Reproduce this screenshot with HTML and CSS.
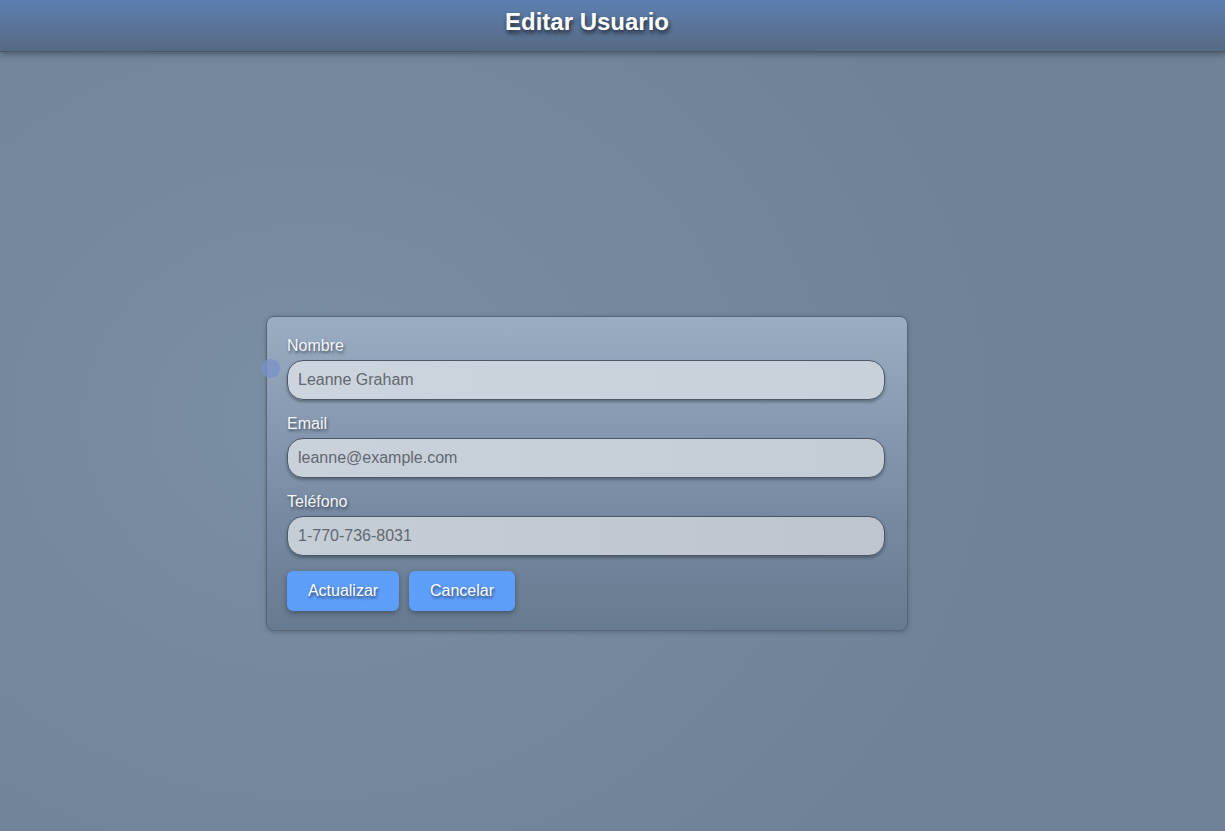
FILE: index.html
```html
<!DOCTYPE html>
<html lang="es">
<head>
<meta charset="utf-8">
<title>Editar Usuario</title>
<link rel="stylesheet" href="styles.css">
</head>
<body>
<header class="topbar">
  <h1 class="title">Editar Usuario</h1>
</header>
<main class="stage">
  <form class="card">
    <span class="dot"></span>
    <label class="field">
      <span class="label">Nombre</span>
      <input class="input" type="text" value="Leanne Graham">
    </label>
    <label class="field">
      <span class="label">Email</span>
      <input class="input" type="email" value="leanne@example.com">
    </label>
    <label class="field">
      <span class="label">Teléfono</span>
      <input class="input" type="text" value="1-770-736-8031">
    </label>
    <div class="actions">
      <button type="button" class="btn btn-update">Actualizar</button>
      <button type="button" class="btn btn-cancel">Cancelar</button>
    </div>
  </form>
</main>
</body>
</html>
```

FILE: styles.css
```css
* { box-sizing: border-box; }
html, body { height: 100%; }
body {
  margin: 0;
  font-family: "Liberation Sans", Arial, sans-serif;
  background: radial-gradient(ellipse 700px 600px at 310px 420px, #7b8fa3 0%, #74879c 55%, #6f8298 100%);
  background-color: #6f8298;
  min-height: 831px;
  display: flex;
  flex-direction: column;
}
.topbar {
  height: 52px;
  padding-right: 51px;
  background: linear-gradient(to bottom, #5b80b1 0%, #5a7397 55%, #566a82 100%);
  border-bottom: 1px solid #4a5566;
  box-shadow: 0 2px 6px rgba(40, 50, 65, 0.55);
  display: flex;
  align-items: flex-start;
  justify-content: center;
  position: relative;
  z-index: 1;
}
.title {
  margin: 8px 0 0 0;
  font-size: 24px;
  font-weight: bold;
  color: #ffffff;
  text-shadow: 1px 3px 4px rgba(20, 25, 35, 0.85);
}
.stage {
  flex: 1;
  display: flex;
  justify-content: center;
  padding-top: 264px;
  padding-right: 51px;
}
.card {
  position: relative;
  width: 642px;
  height: 315px;
  padding: 20px 22px 20px 20px;
  border: 1px solid #5a6677;
  border-radius: 8px;
  background: linear-gradient(to bottom, #9badc3 0%, #8799b0 35%, #7689a0 65%, #687a90 100%);
  box-shadow: 0 1px 4px rgba(40, 50, 65, 0.35);
  display: flex;
  flex-direction: column;
}
.dot {
  position: absolute;
  left: -6px;
  top: 42px;
  width: 19px;
  height: 19px;
  border-radius: 50%;
  background: rgba(120, 145, 200, 0.75);
}
.field {
  display: flex;
  flex-direction: column;
  margin-bottom: 15px;
}
.label {
  font-size: 16px;
  line-height: 18px;
  color: #f4f6f8;
  text-shadow: 1px 2px 3px rgba(30, 40, 55, 0.7);
  margin-bottom: 5px;
}
.input {
  width: 598px;
  height: 40px;
  border: 1px solid #4c5868;
  border-radius: 16px;
  padding: 0 10px;
  font-family: "Liberation Sans", Arial, sans-serif;
  font-size: 16px;
  color: #62686f;
  background: linear-gradient(to right, #ccd4de, #c8d0da);
  box-shadow: 0 2px 3px rgba(40, 50, 65, 0.45);
  outline: none;
}
.field:nth-of-type(2) .input { background: linear-gradient(to right, #c9d1db, #c4ccd6); }
.field:nth-of-type(3) .input { background: linear-gradient(to right, #c5cdd7, #bec5cf); }
.actions {
  display: flex;
  gap: 10px;
  margin-top: 0;
}
.btn {
  height: 40px;
  border: none;
  border-radius: 6px;
  background: #5e9efb;
  color: #ffffff;
  font-family: "Liberation Sans", Arial, sans-serif;
  font-size: 16px;
  text-shadow: 1px 2px 3px rgba(30, 40, 60, 0.75);
  box-shadow: 0 2px 5px rgba(35, 45, 60, 0.5);
  cursor: pointer;
}
.btn-update { width: 112px; }
.btn-cancel { width: 106px; }
```
